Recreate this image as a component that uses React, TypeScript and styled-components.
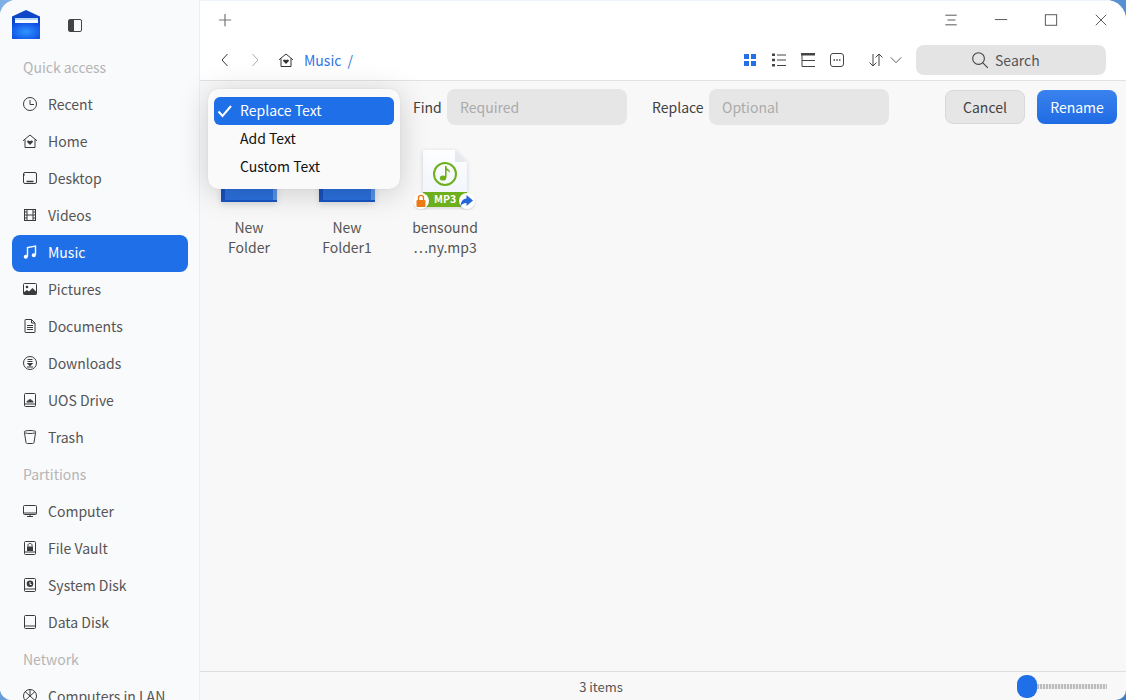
import React, { FC, ReactNode } from 'react'
import styled, { createGlobalStyle } from 'styled-components'

const FONT = `"Noto Sans CJK SC", "Noto Sans", sans-serif`

const GlobalStyle = createGlobalStyle`
  html, body {
    margin: 0;
    padding: 0;
    width: 1126px;
    height: 700px;
    overflow: hidden;
    background: linear-gradient(135deg, #7fb0e4 0%, #3f7cc4 100%);
  }
  * {
    box-sizing: border-box;
  }
`

const Ico: FC<{ size?: number; children: ReactNode }> = ({ size = 16, children }) => (
  <svg
    width={size}
    height={size}
    viewBox="0 0 16 16"
    fill="none"
    stroke="currentColor"
    strokeWidth="1"
    style={{ flexShrink: 0, display: 'block' }}
  >
    {children}
  </svg>
)

const HomeGlyph = () => (
  <>
    <path d="M1 7.800 8 2l7 5.800" />
    <path d="M3 6.500V14.500h10V6.500" />
    <path d="M8 12 5.300 9.300c-.9-1.300 1.200-2.500 2.700-1.100 1.500-1.400 3.600-.2 2.700 1.100z" fill="currentColor" stroke="none" />
  </>
)

const RecentIcon = () => (
  <Ico>
    <circle cx="8" cy="8" r="6.500" />
    <path d="M8 4v4.500h4" />
  </Ico>
)
const DesktopIcon = () => (
  <Ico>
    <rect x="1.500" y="2.500" width="13" height="11" rx="1.500" />
    <path d="M4.500 11.500h7" strokeWidth="1.600" />
    <path d="M1.500 5h1.500" />
  </Ico>
)
const VideosIcon = () => (
  <Ico>
    <rect x="2.500" y="2.500" width="11" height="11" />
    <path d="M5 2.500v11M11 2.500v11M5 8h6M2.500 5H5M2.500 8H5M2.500 11H5M11 5h2.500M11 8h2.500M11 11h2.500" />
  </Ico>
)
const MusicIcon = () => (
  <Ico>
    <path d="M5.500 12.500V3.500l8-1.500v8.800" strokeWidth="1.400" />
    <circle cx="3.800" cy="12.800" r="2" fill="currentColor" stroke="none" />
    <circle cx="11.800" cy="11.300" r="2" fill="currentColor" stroke="none" />
  </Ico>
)
const PicturesIcon = () => (
  <Ico>
    <rect x="1.500" y="2.500" width="13" height="11" rx="1" />
    <circle cx="5" cy="6" r="1.300" fill="currentColor" stroke="none" />
    <path d="M1.500 13.500v-2L5 9l2 1.500L10.500 7l4 4v2.500z" fill="currentColor" stroke="none" />
  </Ico>
)
const DocumentsIcon = () => (
  <Ico>
    <path d="M3 2c0-.3.2-.5.5-.5H9.500L13 5v9c0 .3-.2.5-.5.500h-9c-.3 0-.5-.2-.5-.5z" />
    <path d="M9.500 1.500V5H13M5 7.500h6M5 9.500h6M5 11.500h6" />
  </Ico>
)
const DownloadsIcon = () => (
  <Ico>
    <circle cx="8" cy="8" r="6.500" />
    <path d="M5.500 4.500h5M5.500 6.500h5" />
    <path d="M4.800 8h6.400L8 11.500z" fill="currentColor" stroke="none" />
    <path d="M5 12h6" />
  </Ico>
)
const DriveIcon: FC<{ children?: ReactNode }> = ({ children }) => (
  <Ico>
    <rect x="2.500" y="1.500" width="11" height="13" rx="1" />
    <path d="M2.500 12h11" />
    {children}
  </Ico>
)
const CloudDriveIcon = () => (
  <DriveIcon>
    <path d="M4.500 10.500c0-1.500.8-2 1.800-2 .3-1.500 3-1.800 3.500 0 1 0 1.700.6 1.700 2z" fill="currentColor" stroke="none" />
  </DriveIcon>
)
const LockDriveIcon = () => (
  <DriveIcon>
    <rect x="5" y="6.500" width="6" height="4.500" fill="currentColor" stroke="none" />
    <path d="M6 6.500V5c0-2 4-2 4 0v1.500" />
  </DriveIcon>
)
const SystemDriveIcon = () => (
  <DriveIcon>
    <circle cx="8" cy="6.800" r="3.300" fill="currentColor" stroke="none" />
    <path d="M8 5v2.500h1.600" stroke="#f9fafb" />
  </DriveIcon>
)
const TrashIcon = () => (
  <Ico>
    <ellipse cx="8" cy="3" rx="6" ry="1.500" />
    <path d="M2.500 4 4 13.500c.1.700.7 1 1.500 1h5c.8 0 1.400-.3 1.500-1L13.500 4" />
  </Ico>
)
const ComputerIcon = () => (
  <Ico>
    <rect x="1.500" y="2.500" width="13" height="9" rx="1" />
    <path d="M1.500 10h13M5 13.500h6M8 11.500v2" />
  </Ico>
)
const LanIcon = () => (
  <Ico>
    <circle cx="8" cy="8" r="6.500" />
    <path d="M3 3.500 13 12.500M13 3.500 3 12.500M8 1.500V8" />
  </Ico>
)

type SideEntry = { label: string; icon: ReactNode; active?: boolean } | { heading: string }

const SIDE: SideEntry[] = [
  { heading: 'Quick access' },
  { label: 'Recent', icon: <RecentIcon /> },
  { label: 'Home', icon: <Ico><HomeGlyph /></Ico> },
  { label: 'Desktop', icon: <DesktopIcon /> },
  { label: 'Videos', icon: <VideosIcon /> },
  { label: 'Music', icon: <MusicIcon />, active: true },
  { label: 'Pictures', icon: <PicturesIcon /> },
  { label: 'Documents', icon: <DocumentsIcon /> },
  { label: 'Downloads', icon: <DownloadsIcon /> },
  { label: 'UOS Drive', icon: <CloudDriveIcon /> },
  { label: 'Trash', icon: <TrashIcon /> },
  { heading: 'Partitions' },
  { label: 'Computer', icon: <ComputerIcon /> },
  { label: 'File Vault', icon: <LockDriveIcon /> },
  { label: 'System Disk', icon: <SystemDriveIcon /> },
  { label: 'Data Disk', icon: <DriveIcon /> },
  { heading: 'Network' },
  { label: 'Computers in LAN', icon: <LanIcon /> },
]

const FolderIcon = () => (
  <svg width="64" height="64" viewBox="0 0 64 64" style={{ display: 'block', filter: 'drop-shadow(0 2px 3px rgba(0,0,0,.12))' }}>
    <rect x="4" y="8" width="56" height="48" rx="2" fill="#2b70dd" />
    <rect x="4" y="8" width="4" height="48" rx="1" fill="#1850bd" />
    <rect x="56" y="8" width="4" height="48" fill="#5a93e6" />
    <rect x="4" y="54" width="56" height="2" fill="#1a55c4" />
  </svg>
)

const Mp3Icon = () => (
  <svg width="64" height="64" viewBox="0 0 64 64" style={{ display: 'block' }}>
    <defs>
      <linearGradient id="docPaper" x1="0" y1="0" x2="0" y2="1">
        <stop offset="0" stopColor="#fdfeff" />
        <stop offset="1" stopColor="#eef3f9" />
      </linearGradient>
    </defs>
    <g style={{ filter: 'drop-shadow(0 1px 2px rgba(0,0,0,.15))' }}>
      <path d="M10 4h32l12 12v45H10z" fill="url(#docPaper)" />
      <path d="M42 4v12h12z" fill="#e6eaef" />
      <rect x="10" y="46" width="44" height="15" fill="#6eb01c" />
    </g>
    <text x="32" y="57" fontSize="10.500" fontWeight="700" fill="#fff" textAnchor="middle" fontFamily={FONT}>
      MP3
    </text>
    <circle cx="32" cy="28" r="11" fill="none" stroke="#6eb01c" strokeWidth="2" />
    <path d="M32.800 20v11.500" stroke="#6eb01c" strokeWidth="1.600" />
    <ellipse cx="30" cy="32" rx="3.200" ry="2.600" fill="#6eb01c" />
    <path d="M32.800 20c0 3 5 3 4 7-1-2-2.500-2.500-4-2.500z" fill="#6eb01c" />
    <g style={{ filter: 'drop-shadow(0 1px 1px rgba(0,0,0,.15))' }}>
      <circle cx="8" cy="55" r="8" fill="#fff" />
      <circle cx="54" cy="55" r="8" fill="#fff" />
    </g>
    <rect x="3.500" y="54" width="9" height="7" rx="1" fill="#ee7a14" />
    <path d="M5.500 54v-2c0-3.500 5-3.500 5 0v2" fill="none" stroke="#ee7a14" strokeWidth="1.400" />
    <path d="M53.500 49 60 54.500 53.500 60V57c-3 0-5 1-6 4 0-5 2-8 6-8.500z" fill="#2467d8" />
  </svg>
)

const FILES = [
  { top: 'New', bottom: 'Folder', icon: <FolderIcon /> },
  { top: 'New', bottom: 'Folder1', icon: <FolderIcon /> },
  { top: 'bensound', bottom: '…ny.mp3', icon: <Mp3Icon /> },
]

const MENU = ['Replace Text', 'Add Text', 'Custom Text']

const App: FC = () => (
  <>
    <GlobalStyle />
    <Window>
      <Sidebar>
        <SideTop>
          <svg width="28" height="29" viewBox="0 0 28 29" style={{ display: 'block' }}>
            <defs>
              <radialGradient id="logoBody" cx="0.500" cy="0.550" r="0.650">
                <stop offset="0" stopColor="#2f95ff" />
                <stop offset="1" stopColor="#0d4be2" />
              </radialGradient>
            </defs>
            <path d="M0 6.500 14 0 28 6.500V27.500c0 .8-.6 1.500-1.500 1.500H1.500C.6 29 0 28.300 0 27.500z" fill="#0f46c8" />
            <rect x="3" y="8" width="23" height="2" fill="#b9d6fb" />
            <rect x="3" y="10" width="23" height="3" fill="#f4f8ff" />
            <path d="M0 13h28v14.500c0 .8-.6 1.500-1.500 1.500H1.500C.6 29 0 28.300 0 27.500z" fill="url(#logoBody)" />
          </svg>
          <ToggleBtn>
            <ToggleFill />
          </ToggleBtn>
        </SideTop>
        <SideList>
          {SIDE.map(entry =>
            'heading' in entry ? (
              <SideHeading key={entry.heading}>{entry.heading}</SideHeading>
            ) : (
              <SideItem key={entry.label} $active={entry.active}>
                {entry.icon}
                <span>{entry.label}</span>
              </SideItem>
            ),
          )}
        </SideList>
      </Sidebar>
      <Main>
        <Header>
          <TitleRow>
            <Ico size={14}>
              <path d="M8 1v14M1 8h14" stroke="#777" strokeWidth="1.400" />
            </Ico>
            <WindowButtons>
              <Ico size={14}>
                <path d="M1.500 2.500h13M4 8h9M1.500 13.500h13" stroke="#444" />
              </Ico>
              <Ico size={14}>
                <path d="M1 7.500h14" stroke="#444" />
              </Ico>
              <Ico size={14}>
                <rect x="1.500" y="2" width="13" height="12" stroke="#444" />
              </Ico>
              <Ico size={14}>
                <path d="M2 2l12 12M14 2 2 14" stroke="#444" />
              </Ico>
            </WindowButtons>
          </TitleRow>
          <ToolRow>
            <NavGroup>
              <Ico>
                <path d="M10.500 2 5 8l5.500 6" stroke="#333" />
              </Ico>
              <Ico>
                <path d="M5.500 2 11 8l-5.500 6" stroke="#aaa" />
              </Ico>
              <Crumb>
                <Ico>
                  <HomeGlyph />
                </Ico>
                <CrumbLink>Music</CrumbLink>
                <CrumbLink>/</CrumbLink>
              </Crumb>
            </NavGroup>
            <ViewGroup>
              <ViewIcons>
                <Ico>
                  <path d="M2 2h5v5H2zM9 2h5v5H9zM2 9h5v5H2zM9 9h5v5H9z" fill="#2370e8" stroke="none" />
                </Ico>
                <Ico>
                  <path d="M1 1.500h3v2.500H1zM1 6.800h3v2.500H1zM1 12h3v2.500H1z" fill="#444" stroke="none" />
                  <path d="M6 3h9M6 8h9M6 13.500h9" stroke="#444" />
                </Ico>
                <Ico>
                  <rect x="1" y="1" width="14" height="2.500" fill="#444" stroke="none" />
                  <path d="M2 3v11.500h13M2 8.500h13" stroke="#444" />
                </Ico>
                <Ico>
                  <rect x="1.500" y="1.500" width="13" height="13" rx="2.500" stroke="#444" />
                  <path d="M4.500 8h1.500M7.300 8h1.500M10 8h1.500" stroke="#444" strokeWidth="1.500" />
                </Ico>
              </ViewIcons>
              <SortBtn>
                <Ico>
                  <path d="M5 2v12M1.500 10.500 5 14l3.500-3.500M11 14V2M7.500 5.500 11 2l3.500 3.500" stroke="#444" />
                </Ico>
                <Ico size={14}>
                  <path d="M2 5l6 6 6-6" stroke="#444" />
                </Ico>
              </SortBtn>
              <SearchBox>
                <Ico size={18}>
                  <circle cx="6.700" cy="6.700" r="5.200" stroke="#444" />
                  <path d="M10.500 10.500l4.500 4.500" stroke="#444" />
                </Ico>
                <span>Search</span>
              </SearchBox>
            </ViewGroup>
          </ToolRow>
        </Header>
        <RenameBar>
          <FieldLabel $width={34}>Find</FieldLabel>
          <Field $gap={25}>Required</Field>
          <FieldLabel $width={57}>Replace</FieldLabel>
          <Field $gap={56}>Optional</Field>
          <CancelBtn>Cancel</CancelBtn>
          <RenameBtn>Rename</RenameBtn>
        </RenameBar>
        <FileArea>
          {FILES.map(f => (
            <FileItem key={f.top + f.bottom}>
              {f.icon}
              <FileName>
                {f.top}
                <br />
                {f.bottom}
              </FileName>
            </FileItem>
          ))}
        </FileArea>
        <StatusBar>
          <StatusText>3 items</StatusText>
          <Slider>
            <SliderHandle />
            <SliderTrack />
          </Slider>
        </StatusBar>
        <ModeMenu>
          {MENU.map((m, i) => (
            <ModeItem key={m} $selected={i === 0}>
              {i === 0 && (
                <CheckMark>
                  <Ico size={16}>
                    <path d="M1.500 8.500l4 4.500 8.500-10" stroke="#fff" strokeWidth="2" />
                  </Ico>
                </CheckMark>
              )}
              {m}
            </ModeItem>
          ))}
        </ModeMenu>
      </Main>
    </Window>
  </>
)

export default App

const Window = styled.div`
  width: 1126px;
  height: 700px;
  display: flex;
  overflow: hidden;
  border-radius: 16px 20px 10px 12px;
  background: #f8f8f8;
  font-family: ${FONT};
  font-size: 14px;
`

const Sidebar = styled.aside`
  width: 200px;
  flex-shrink: 0;
  height: 700px;
  overflow: hidden;
  background: #f9fafb;
  border-right: 1px solid #eeeeee;
`

const SideTop = styled.div`
  height: 50px;
  padding: 10px 0 0 12px;
  display: flex;
  align-items: flex-start;
  gap: 28px;
`

const ToggleBtn = styled.div`
  width: 14px;
  height: 13px;
  margin-top: 9px;
  border: 1px solid #444;
  border-radius: 2px;
`

const ToggleFill = styled.div`
  width: 5px;
  height: 100%;
  background: #444;
`

const SideList = styled.div`
  display: flex;
  flex-direction: column;
  padding: 0 11px 0 12px;
`

const SideHeading = styled.div`
  height: 37px;
  line-height: 34px;
  padding-left: 11px;
  color: #b5b5b5;
`

const SideItem = styled.div<{ $active?: boolean }>`
  height: 37px;
  flex-shrink: 0;
  display: flex;
  align-items: center;
  gap: 10px;
  padding: 0 0 3px 10px;
  border-radius: 8px;
  color: ${p => (p.$active ? '#fff' : '#555555')};
  background: ${p => (p.$active ? '#1f6fe8' : 'transparent')};
  white-space: nowrap;

  svg {
    color: ${p => (p.$active ? '#fff' : '#3a3a3a')};
  }
`

const Main = styled.main`
  position: relative;
  flex: 1;
  min-width: 0;
  display: flex;
  flex-direction: column;
`

const Header = styled.header`
  height: 81px;
  flex-shrink: 0;
  background: #fff;
  border-bottom: 1px solid #e2e2e2;
  box-shadow: inset 0 1px 0 #eef4fc;
`

const TitleRow = styled.div`
  height: 40px;
  display: flex;
  align-items: center;
  justify-content: space-between;
  padding: 0 18px;
`

const WindowButtons = styled.div`
  display: flex;
  align-items: center;
  gap: 36px;
  color: #444;
`

const ToolRow = styled.div`
  height: 40px;
  display: flex;
  align-items: center;
  justify-content: space-between;
  padding: 0 20px 0 17px;
`

const NavGroup = styled.div`
  display: flex;
  align-items: center;
  gap: 14px;
`

const Crumb = styled.div`
  display: flex;
  align-items: center;
  gap: 6px;
  margin-left: 1px;
  color: #333;
`

const CrumbLink = styled.span`
  color: #2f74e8;

  &:first-of-type {
    margin-left: 4px;
  }
`

const ViewGroup = styled.div`
  display: flex;
  align-items: center;
`

const ViewIcons = styled.div`
  display: flex;
  align-items: center;
  gap: 13px;
`

const SortBtn = styled.div`
  display: flex;
  align-items: center;
  gap: 5px;
  margin: 0 13px 0 23px;
`

const SearchBox = styled.div`
  width: 190px;
  height: 30px;
  display: flex;
  align-items: center;
  gap: 6px;
  padding-left: 55px;
  border-radius: 8px;
  background: #e4e4e4;
  color: #555;
`

const RenameBar = styled.div`
  height: 52px;
  flex-shrink: 0;
  display: flex;
  align-items: center;
  padding: 0 9px 0 213px;
`

const FieldLabel = styled.span<{ $width: number }>`
  width: ${p => p.$width}px;
  padding-bottom: 1px;
  color: #414141;
`

const Field = styled.div<{ $gap: number }>`
  width: 180px;
  height: 36px;
  display: flex;
  align-items: center;
  padding: 0 0 1px 13px;
  margin-right: ${p => p.$gap}px;
  border-radius: 8px;
  background: #e6e6e6;
  color: #ababab;
`

const CancelBtn = styled.div`
  width: 80px;
  height: 34px;
  display: flex;
  align-items: center;
  justify-content: center;
  padding-bottom: 1px;
  margin-right: 12px;
  border: 1px solid #d9d9d9;
  border-radius: 8px;
  background: #e6e6e6;
  color: #414141;
`

const RenameBtn = styled.div`
  width: 80px;
  height: 34px;
  display: flex;
  align-items: center;
  justify-content: center;
  padding-bottom: 1px;
  border-radius: 8px;
  background: linear-gradient(180deg, #3a82ee, #1f6be3);
  color: #fff;
`

const FileArea = styled.div`
  flex: 1;
  display: flex;
  align-items: flex-start;
  padding: 13px 0 0 1px;
  gap: 2px;
`

const FileItem = styled.div`
  width: 96px;
  display: flex;
  flex-direction: column;
  align-items: center;
`

const FileName = styled.div`
  margin-top: 7px;
  line-height: 20px;
  text-align: center;
  color: #555;
`

const StatusBar = styled.footer`
  position: relative;
  height: 29px;
  flex-shrink: 0;
  display: flex;
  align-items: center;
  justify-content: center;
  border-top: 1px solid #dedede;
  font-size: 13px;
  color: #555;
`

const StatusText = styled.span`
  margin-right: 124px;
`

const Slider = styled.div`
  position: absolute;
  left: 817px;
  top: 3px;
  display: flex;
  align-items: center;
`

const SliderHandle = styled.div`
  width: 20px;
  height: 23px;
  border-radius: 9px;
  background: #1f6fe8;
`

const SliderTrack = styled.div`
  width: 70px;
  height: 5px;
  background: repeating-linear-gradient(90deg, #bdbdbd 0 2px, #e8e8e8 2px 3px);
`

const ModeMenu = styled.div`
  position: absolute;
  left: 8px;
  top: 89px;
  width: 192px;
  height: 100px;
  padding: 8px 6px;
  border-radius: 10px;
  background: #fafafa;
  box-shadow: 0 4px 30px rgba(0, 0, 0, 0.18), 0 0 1px rgba(0, 0, 0, 0.2);
`

const ModeItem = styled.div<{ $selected?: boolean }>`
  position: relative;
  height: 28px;
  display: flex;
  align-items: center;
  padding: 0 0 2px 26px;
  border-radius: 6px;
  color: ${p => (p.$selected ? '#fff' : '#111')};
  background: ${p => (p.$selected ? '#1f6fe8' : 'transparent')};
`

const CheckMark = styled.span`
  position: absolute;
  left: 3px;
  top: 6px;
`
